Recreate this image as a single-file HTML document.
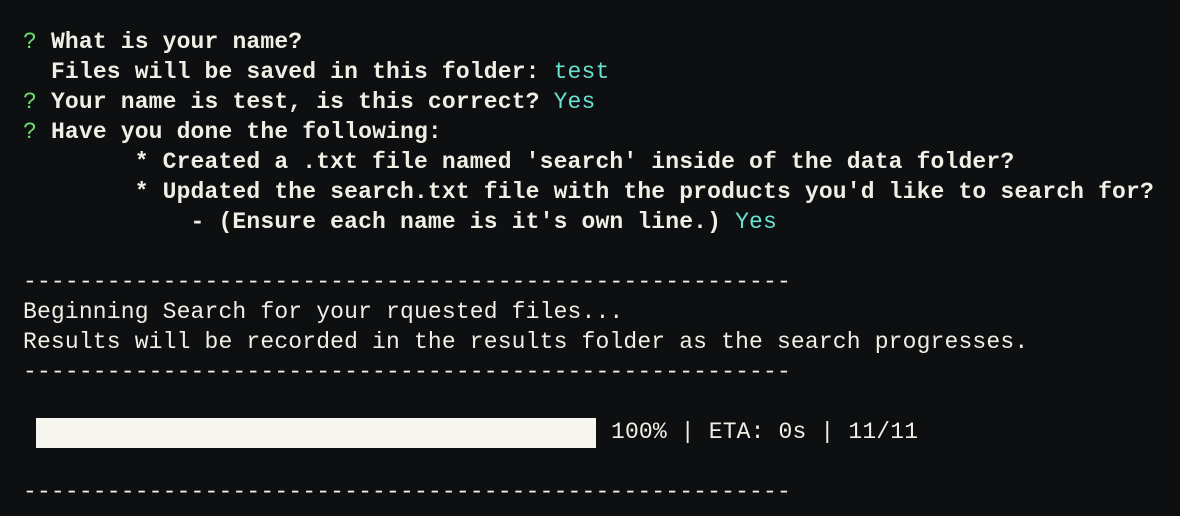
<!DOCTYPE html>
<html><head><style>
html,body{margin:0;padding:0;background:#0e0f11;}
body{width:1180px;height:516px;overflow:hidden;position:relative;}
pre,.p{position:absolute;left:23px;top:27px;margin:0;font-family:"Liberation Mono",monospace;font-size:23px;line-height:30px;color:#f0efe6;letter-spacing:0.16px;}
.p{left:611px;top:417px;}
.b{font-weight:bold;}
.g{color:#6ee06e;}
.c{color:#6ae0d0;}
.bar{position:absolute;left:36px;top:418px;width:560px;height:30px;background:#f6f5ee;}
</style></head><body>
<pre><span class="g">?</span> <span class="b">What is your name?</span>
  <span class="b">Files will be saved in this folder:</span> <span class="c">test</span>
<span class="g">?</span> <span class="b">Your name is test, is this correct?</span> <span class="c">Yes</span>
<span class="g">?</span> <span class="b">Have you done the following:</span>
<span class="b">        * Created a .txt file named 'search' inside of the data folder?</span>
<span class="b">        * Updated the search.txt file with the products you'd like to search for?</span>
<span class="b">            - (Ensure each name is it's own line.)</span> <span class="c">Yes</span>

-------------------------------------------------------
Beginning Search for your rquested files...
Results will be recorded in the results folder as the search progresses.
-------------------------------------------------------



-------------------------------------------------------</pre>
<div class="bar"></div>
<div class="p">100% | ETA: 0s | 11/11</div>
</body></html>
